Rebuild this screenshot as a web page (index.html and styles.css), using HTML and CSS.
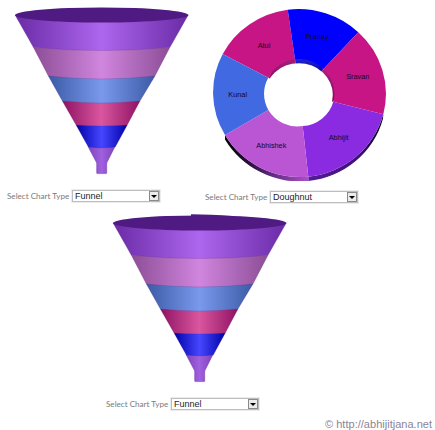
FILE: index.html
```html
<!DOCTYPE html>
<html>
<head>
    <title>Select Chart Type</title>
    <link rel="stylesheet" href="styles.css">
</head>
<body>
    <div class="page">
        <div class="top-row">
            <div class="chart chart-funnel">
                <svg class="funnel" viewBox="0 0 200 180">
                    <defs>
                        <linearGradient id="band1"><stop offset="0" stop-color="#6a2ba6"/><stop offset="0.5" stop-color="#ad66ee"/><stop offset="1" stop-color="#6a2ba6"/></linearGradient>
                        <linearGradient id="band2"><stop offset="0" stop-color="#8c4d96"/><stop offset="0.5" stop-color="#d086de"/><stop offset="1" stop-color="#8c4d96"/></linearGradient>
                        <linearGradient id="band3"><stop offset="0" stop-color="#3a5aa6"/><stop offset="0.5" stop-color="#7b99ec"/><stop offset="1" stop-color="#3a5aa6"/></linearGradient>
                        <linearGradient id="band4"><stop offset="0" stop-color="#8e1262"/><stop offset="0.5" stop-color="#da569f"/><stop offset="1" stop-color="#8e1262"/></linearGradient>
                        <linearGradient id="band5"><stop offset="0" stop-color="#0000a8"/><stop offset="0.5" stop-color="#4646ff"/><stop offset="1" stop-color="#0000a8"/></linearGradient>
                        <linearGradient id="band6"><stop offset="0" stop-color="#7f42ba"/><stop offset="0.5" stop-color="#a060e0"/><stop offset="1" stop-color="#7f42ba"/></linearGradient>
                        <symbol id="funnelShape" viewBox="0 0 200 180">
                            <path fill="url(#band6)" stroke="#7038a8" stroke-width="0.5" d="M88 146.5 L96.7 163 V173 Q96.7 173.6 97.4 173.6 H106 Q106.7 173.6 106.7 173 V163 L115 146.5 Z"/>
                            <path class="band" fill="url(#band5)" d="M76 125 L88.3 147 Q101.7 149 115.3 147 L127.3 125 Z"/>
                            <path class="band" fill="url(#band4)" d="M62.3 101 L76 125 Q101.7 127 127.3 125 L140 101 Z"/>
                            <path class="band" fill="url(#band3)" d="M48.3 76 L62.3 101 Q101.7 105 140 101 L155 76 Z"/>
                            <path class="band" fill="url(#band2)" d="M33.3 47.3 L48.3 76 Q101.7 82 155 76 L170 47.3 Z"/>
                            <path class="band" fill="url(#band1)" d="M15 15 L33.3 47.3 Q101.7 53.9 170 47.3 L188.3 15 Z"/>
                            <ellipse cx="101.7" cy="15" rx="86.7" ry="7.5" fill="#4f1a82"/>
                        </symbol>
                    </defs>
                    <use href="#funnelShape"/>
                </svg>
                <div class="chart-type">
                    <span class="chart-label">Select Chart Type</span>
                    <div class="dropdown"><span class="dropdown-value">Funnel</span><span class="dropdown-btn"></span></div>
                </div>
            </div>

            <div class="chart chart-doughnut">
                <svg class="doughnut" viewBox="205 0 190 181">
                    <defs>
                        <linearGradient id="rimLeft"><stop offset="0" stop-color="#000"/><stop offset="0.3" stop-color="#2a1040"/><stop offset="0.55" stop-color="#5c2a80"/><stop offset="1" stop-color="#ab50c6"/></linearGradient>
                        <linearGradient id="rimRight"><stop offset="0" stop-color="#561c98"/><stop offset="0.7" stop-color="#3c1078"/><stop offset="1" stop-color="#000"/></linearGradient>
                        <linearGradient id="wallPink" x2="0" y2="1"><stop offset="0" stop-color="#a82080"/><stop offset="1" stop-color="#7a0c55"/></linearGradient>
                        <linearGradient id="wallBlue" x2="0" y2="1"><stop offset="0" stop-color="#3535e8"/><stop offset="0.5" stop-color="#0000a0"/></linearGradient>
                    </defs>
                    <path fill="url(#rimRight)" d="M308.3 176.7 A86.7 84 0 0 0 383.3 114.3 L383 118.5 A86.7 84 0 0 1 308.3 181 Z"/>
                    <path fill="url(#rimLeft)" d="M225 135 A86.7 84 0 0 0 308.3 176.7 V181 A86.7 84 0 0 1 225 139.5 Z"/>
                    <!-- inner wall of the hole, the slices cover everything but the sliver -->
                    <path fill="url(#wallPink)" d="M300 95 L268.3 77.7 L282 52 L295 59.3 Z"/>
                    <path fill="url(#wallBlue)" d="M300 95 L295 59.3 L310 52 L323.3 69.3 Z"/>
                    <path fill="url(#wallPink)" d="M300 95 L323.3 69.3 L345 75 L333.3 101.7 Z"/>
                    <ellipse cx="298.8" cy="94.7" rx="34" ry="31.5" fill="#fff"/>
                    <path fill="#c71585" d="M287.7 9.7 L295 59.3 A34 33.3 0 0 0 268.3 77.7 L222.7 54 A86.7 84 0 0 1 287.7 9.7 Z"/>
                    <path fill="#0000ff" d="M287.7 9.7 A86.7 84 0 0 1 358.3 32.3 L323.3 69.3 A34 33.3 0 0 0 295 59.3 Z"/>
                    <path fill="#c71585" d="M358.3 32.3 A86.7 84 0 0 1 383.3 114.3 L333.3 101.7 A34 33.3 0 0 0 323.3 69.3 Z"/>
                    <path fill="#8a2be2" d="M383.3 114.3 A86.7 84 0 0 1 308.3 176.7 L302.7 126 A34 33.3 0 0 0 333.3 101.7 Z"/>
                    <path fill="#ba55d3" d="M308.3 176.7 A86.7 84 0 0 1 225 135 L268.3 110 A34 33.3 0 0 0 302.7 126 Z"/>
                    <path fill="#4169e1" d="M225 135 A86.7 84 0 0 1 222.7 54 L268.3 77.7 A34 33.3 0 0 0 268.3 110 Z"/>
                    <g class="slice-labels">
                        <text x="264" y="47.5">Atul</text>
                        <text x="317" y="39">Pranay</text>
                        <text x="357.7" y="79">Sravan</text>
                        <text x="338.7" y="140">Abhijit</text>
                        <text x="271.3" y="147.5">Abhishek</text>
                        <text x="237.7" y="96.5">Kunal</text>
                    </g>
                </svg>
                <div class="chart-type">
                    <span class="chart-label">Select Chart Type</span>
                    <div class="dropdown"><span class="dropdown-value">Doughnut</span><span class="dropdown-btn"></span></div>
                </div>
            </div>
        </div>

        <div class="chart chart-bottom">
            <svg class="funnel" viewBox="0 0 200 180">
                <use href="#funnelShape"/>
                <path fill="#4f1a82" d="M93 6.3 V8 H135 Q112 6.3 93 6.3 Z"/>
            </svg>
            <div class="chart-type">
                <span class="chart-label">Select Chart Type</span>
                <div class="dropdown"><span class="dropdown-value">Funnel</span><span class="dropdown-btn"></span></div>
            </div>
        </div>
    </div>

    <div class="watermark">© http://abhijitjana.net</div>
</body>
</html>
```

FILE: styles.css
```css
html, body { margin: 0; padding: 0; background: #fff; }
body { width: 435px; height: 430px; overflow: hidden; font-family: "Liberation Sans", Arial, sans-serif; position: relative; }
.page { display: flex; flex-direction: column; }
.top-row { display: flex; gap: 5px; }

.chart { display: flex; flex-direction: column; }
.funnel { display: block; width: 200px; height: 180px; }
.doughnut { display: block; width: 190px; height: 181px; }
.band { stroke: #5a2a80; stroke-opacity: 0.4; stroke-width: 0.5; }

.chart-funnel .chart-type { padding: 10px 0 0 7px; }
.chart-doughnut .chart-type { padding: 10px 0 0 0; }
.chart-bottom { margin-left: 98px; margin-top: 5px; }
.chart-bottom .chart-type { padding: 10px 0 0 8px; }

.chart-type { display: flex; align-items: center; gap: 2px; height: 12px; }
.chart-label { font-family: Lato, sans-serif; font-size: 8.1px; line-height: 12px; color: #7a7a7a; width: 63px; white-space: nowrap; }
.dropdown { display: flex; align-items: center; justify-content: space-between; box-sizing: border-box; width: 88px; height: 12px; border: 1px solid #bdbdbd; background: #fff; box-shadow: 0 0 0 1px #ececec; }
.dropdown-value { font-size: 9px; color: #1c1c2c; padding-left: 2px; }
.dropdown-btn { position: relative; width: 10px; height: 10px; box-sizing: border-box; border: 1px solid #8a8a8a; background: #ececec; }
.dropdown-btn::after { content: ""; position: absolute; left: 1px; top: 3px; border: 3px solid transparent; border-top: 3px solid #000; border-bottom: 0; }

.slice-labels text { font-size: 7.3px; text-anchor: middle; fill: #160a22; }

.watermark { position: absolute; left: 325px; top: 418px; font-size: 11px; letter-spacing: 0.02px; color: #8c8496; white-space: nowrap; }
```
